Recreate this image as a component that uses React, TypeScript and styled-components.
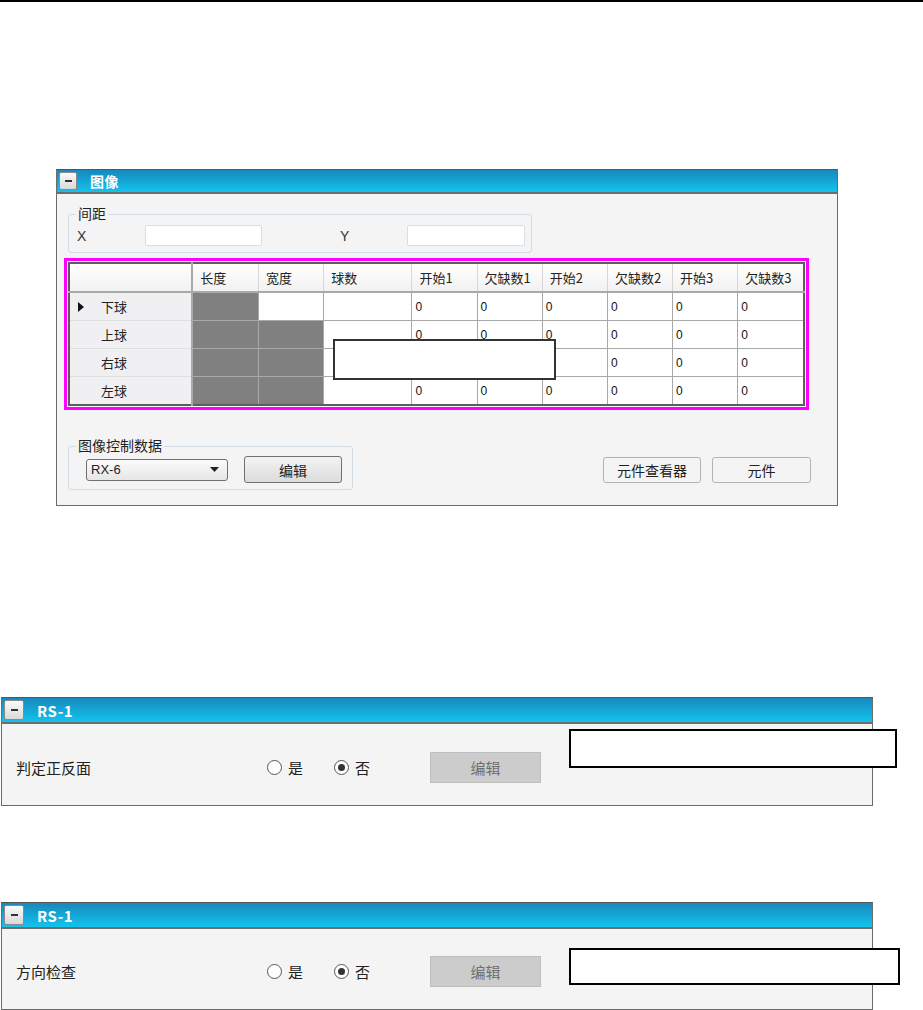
import React from "react";
import styled, { createGlobalStyle } from "styled-components";

const GlobalStyle = createGlobalStyle`
    html, body {
        margin: 0;
        padding: 0;
        background: #ffffff;
    }
    body {
        font-family: "Noto Sans CJK SC", "Liberation Sans", sans-serif;
        color: #222;
    }
`;

const columns = [
    { label: "长度", width: 66 },
    { label: "宽度", width: 65 },
    { label: "球数", width: 88 },
    { label: "开始1", width: 65 },
    { label: "欠缺数1", width: 65 },
    { label: "开始2", width: 65 },
    { label: "欠缺数2", width: 65 },
    { label: "开始3", width: 65 },
    { label: "欠缺数3", width: 66 },
];

const rows = [
    { name: "下球", dark: [true, false, false], current: true },
    { name: "上球", dark: [true, true, false], current: false },
    { name: "右球", dark: [true, true, false], current: false },
    { name: "左球", dark: [true, true, false], current: false },
];

const Page = styled.div`
    display: flex;
    flex-direction: column;
    width: 923px;
    min-height: 1010px;
`;

const TopRule = styled.div`
    height: 2px;
    background: #000;
`;

const Panel = styled.section<{ $left: number; $top: number; $width: number }>`
    position: relative;
    margin-left: ${p => p.$left}px;
    margin-top: ${p => p.$top}px;
    width: ${p => p.$width}px;
    box-sizing: border-box;
    border: 1px solid #6b6b6b;
    border-top-color: #555;
    background: #f4f4f4;
`;

const TitleBar = styled.div<{ $height: number }>`
    display: flex;
    align-items: center;
    height: ${p => p.$height}px;
    box-sizing: border-box;
    padding-left: 2px;
    background: linear-gradient(to bottom, #1888bb 0%, #14a9d8 55%, #12c3ed 100%);
    border-bottom: 2px solid #6d6d6d;
`;

const Collapse = styled.span<{ $size: number }>`
    display: flex;
    align-items: center;
    justify-content: center;
    width: ${p => p.$size}px;
    height: ${p => p.$size}px;
    box-sizing: border-box;
    border: 1px solid #8a8a8a;
    border-radius: 2px;
    background: linear-gradient(to bottom, #fafafa, #d9d9d9);

    &::before {
        content: "";
        width: 7px;
        height: 2px;
        background: #333;
    }
`;

const Title = styled.span<{ $size: number }>`
    margin-left: 13px;
    color: #fff;
    font-size: ${p => p.$size}px;
    font-weight: 700;
    letter-spacing: 0.5px;
`;

const Body = styled.div`
    display: flex;
    flex-direction: column;
    padding: 20px 0 15px 11px;
    font-size: 14px;
`;

const GroupBox = styled.div<{ $width: number; $height: number }>`
    position: relative;
    width: ${p => p.$width}px;
    height: ${p => p.$height}px;
    box-sizing: border-box;
    border: 1px solid #d3dde5;
    border-radius: 3px;
`;

const Caption = styled.span`
    position: absolute;
    left: 7px;
    top: -12px;
    padding: 0 2px;
    background: #f4f4f4;
    font-size: 14px;
    line-height: 20px;
    color: #222;
`;

const SpacingRow = styled.div`
    display: flex;
    align-items: center;
    padding: 10px 0 0 8px;
`;

const AxisLabel = styled.span<{ $width: number }>`
    width: ${p => p.$width}px;
    font-family: "Liberation Sans", sans-serif;
    font-size: 14px;
    color: #333;
`;

const TextInput = styled.div<{ $width: number; $gap?: number }>`
    width: ${p => p.$width}px;
    height: 21px;
    margin-right: ${p => p.$gap ?? 0}px;
    box-sizing: border-box;
    border: 1px solid #d6dee6;
    border-radius: 2px;
    background: #fff;
`;

const HighlightFrame = styled.div`
    position: relative;
    width: 745px;
    margin: 5px 0 0 -4px;
    box-sizing: border-box;
    border: 3px solid #ff00ff;
    padding: 1px;
`;

const Grid = styled.table`
    border-collapse: collapse;
    table-layout: fixed;
    width: 737px;
    border: 2px solid #5e5e5e;
    background: #fff;
    font-size: 13px;
`;

const Col = styled.col<{ $width: number }>`
    width: ${p => p.$width}px;
`;

const HeadCell = styled.th`
    height: 27px;
    padding: 0 0 0 7px;
    overflow: hidden;
    text-align: left;
    font-weight: 400;
    white-space: nowrap;
    color: #222;
    background: linear-gradient(to bottom, #ffffff, #f1f1f1);
    border-right: 1px solid #d7d7d7;
    border-bottom: 2px solid #a9a9a9;
`;

const RowHead = styled.th`
    height: 27px;
    padding: 0;
    font-weight: 400;
    text-align: left;
    background: #f0f0f2;
    border-right: 2px solid #a9a9a9;
    border-bottom: 1px solid #dedede;
`;

const CornerCell = styled(RowHead)`
    background: linear-gradient(to bottom, #ffffff, #f1f1f1);
    border-bottom: 2px solid #a9a9a9;
`;

const RowHeadInner = styled.div`
    display: flex;
    align-items: center;
    padding-left: 8px;
`;

const Marker = styled.span`
    width: 23px;
    display: flex;
    align-items: center;
`;

const Cell = styled.td<{ $dark?: boolean }>`
    height: 27px;
    padding: 0 0 0 3px;
    overflow: hidden;
    font-family: "Liberation Sans Narrow", "Liberation Sans", sans-serif;
    font-size: 12px;
    background: ${p => (p.$dark ? "#808080" : "#fff")};
    border: 1px solid #a8a8a8;
    color: #111;
`;

const GridCover = styled.div<{ $left: number; $top: number; $width: number; $height: number }>`
    position: absolute;
    left: ${p => p.$left}px;
    top: ${p => p.$top}px;
    width: ${p => p.$width}px;
    height: ${p => p.$height}px;
    box-sizing: border-box;
    border: 2px solid #333;
    background: #fff;
`;

const ControlRow = styled.div`
    display: flex;
    align-items: flex-end;
    justify-content: space-between;
    margin-top: 36px;
    padding-right: 26px;
`;

const ControlInner = styled.div`
    display: flex;
    align-items: center;
    padding: 9px 0 0 17px;
`;

const Select = styled.div`
    display: flex;
    align-items: center;
    justify-content: space-between;
    width: 142px;
    height: 22px;
    box-sizing: border-box;
    padding: 0 8px 0 4px;
    margin-right: 16px;
    border: 1px solid #707070;
    border-radius: 3px;
    background: linear-gradient(to bottom, #fbfbfb, #e6e6e6);
    font-family: "Liberation Sans", sans-serif;
    font-size: 13px;
    color: #222;
`;

const Button = styled.button<{ $width: number; $variant?: "raised" | "flat" }>`
    width: ${p => p.$width}px;
    height: ${p => (p.$variant === "flat" ? 26 : 27)}px;
    box-sizing: border-box;
    border: 1px solid ${p => (p.$variant === "flat" ? "#b3b3b3" : "#707070")};
    border-radius: 3px;
    background: ${p =>
        p.$variant === "flat"
            ? "#f4f4f4"
            : "linear-gradient(to bottom, #f3f3f3, #dcdcdc)"};
    font-family: "Noto Sans CJK SC", sans-serif;
    font-size: 14px;
    color: #222;
    padding: 0;
`;

const ButtonPair = styled.div`
    display: flex;
    gap: 11px;
    margin-bottom: 7px;
`;

const OptionBody = styled.div<{ $height: number; $pad: number }>`
    display: flex;
    align-items: flex-start;
    height: ${p => p.$height}px;
    box-sizing: border-box;
    padding: ${p => p.$pad}px 0 0 14px;
    font-size: 15px;
`;

const OptionInner = styled.div`
    display: flex;
    align-items: center;
    height: 31px;
`;

const OptionLabel = styled.span`
    width: 251px;
`;

const Radio = styled.span<{ $checked?: boolean }>`
    display: inline-flex;
    align-items: center;
    justify-content: center;
    width: 15px;
    height: 15px;
    box-sizing: border-box;
    border: 1px solid #555;
    border-radius: 50%;
    background: #fff;
    margin-right: 6px;

    &::after {
        content: "";
        display: ${p => (p.$checked ? "block" : "none")};
        width: 7px;
        height: 7px;
        border-radius: 50%;
        background: #333;
    }
`;

const RadioItem = styled.label<{ $gap: number }>`
    display: flex;
    align-items: center;
    margin-right: ${p => p.$gap}px;
    color: #222;
`;

const DisabledButton = styled.button`
    width: 111px;
    height: 31px;
    box-sizing: border-box;
    border: 1px solid #bebebe;
    background: #cccccc;
    font-family: "Noto Sans CJK SC", sans-serif;
    font-size: 15px;
    color: #6e6e6e;
    padding: 0;
`;

const Note = styled.div<{ $top: number; $width: number; $height: number }>`
    position: absolute;
    left: 567px;
    top: ${p => p.$top}px;
    width: ${p => p.$width}px;
    height: ${p => p.$height}px;
    box-sizing: border-box;
    border: 2px solid #000;
    background: #fff;
`;

function Arrow() {
    return (
        <svg width="6" height="10" viewBox="0 0 6 10">
            <path d="M0 0 L6 5 L0 10 Z" fill="#111" />
        </svg>
    );
}

function Caret() {
    return (
        <svg width="9" height="5" viewBox="0 0 9 5">
            <path d="M0 0 H9 L4.5 5 Z" fill="#222" />
        </svg>
    );
}

type OptionPanelProps = {
    top: number;
    label: string;
    pad: number;
    bodyHeight: number;
    noteTop: number;
    noteWidth: number;
    noteHeight: number;
};

function OptionPanel(props: OptionPanelProps) {
    return (
        <Panel $left={1} $top={props.top} $width={872}>
            <TitleBar $height={26}>
                <Collapse $size={20} />
                <Title $size={15}>RS-1</Title>
            </TitleBar>
            <OptionBody $height={props.bodyHeight} $pad={props.pad}>
                <OptionInner>
                    <OptionLabel>{props.label}</OptionLabel>
                    <RadioItem $gap={31}>
                        <Radio />是
                    </RadioItem>
                    <RadioItem $gap={60}>
                        <Radio $checked />否
                    </RadioItem>
                    <DisabledButton disabled>编辑</DisabledButton>
                </OptionInner>
            </OptionBody>
            <Note $top={props.noteTop} $width={props.noteWidth} $height={props.noteHeight} />
        </Panel>
    );
}

export default function App() {
    return (
        <Page>
            <GlobalStyle />
            <TopRule />

            <Panel $left={56} $top={167} $width={782}>
                <TitleBar $height={24}>
                    <Collapse $size={18} />
                    <Title $size={14}>图像</Title>
                </TitleBar>
                <Body>
                    <GroupBox $width={464} $height={39}>
                        <Caption>间距</Caption>
                        <SpacingRow>
                            <AxisLabel $width={68}>X</AxisLabel>
                            <TextInput $width={117} $gap={78} />
                            <AxisLabel $width={67}>Y</AxisLabel>
                            <TextInput $width={118} />
                        </SpacingRow>
                    </GroupBox>

                    <HighlightFrame>
                        <Grid>
                            <colgroup>
                                <Col $width={123} />
                                {columns.map(c => (
                                    <Col key={c.label} $width={c.width} />
                                ))}
                            </colgroup>
                            <thead>
                                <tr>
                                    <CornerCell />
                                    {columns.map(c => (
                                        <HeadCell key={c.label}>{c.label}</HeadCell>
                                    ))}
                                </tr>
                            </thead>
                            <tbody>
                                {rows.map(r => (
                                    <tr key={r.name}>
                                        <RowHead>
                                            <RowHeadInner>
                                                <Marker>{r.current && <Arrow />}</Marker>
                                                {r.name}
                                            </RowHeadInner>
                                        </RowHead>
                                        {r.dark.map((d, i) => (
                                            <Cell key={i} $dark={d} />
                                        ))}
                                        {columns.slice(3).map(c => (
                                            <Cell key={c.label}>0</Cell>
                                        ))}
                                    </tr>
                                ))}
                            </tbody>
                        </Grid>
                        <GridCover $left={266} $top={78} $width={223} $height={41} />
                    </HighlightFrame>

                    <ControlRow>
                        <GroupBox $width={285} $height={44}>
                            <Caption>图像控制数据</Caption>
                            <ControlInner>
                                <Select>
                                    RX-6
                                    <Caret />
                                </Select>
                                <Button $width={98}>编辑</Button>
                            </ControlInner>
                        </GroupBox>
                        <ButtonPair>
                            <Button $width={98} $variant="flat">元件查看器</Button>
                            <Button $width={99} $variant="flat">元件</Button>
                        </ButtonPair>
                    </ControlRow>
                </Body>
            </Panel>

            <OptionPanel
                top={191}
                label="判定正反面"
                pad={28}
                bodyHeight={81}
                noteTop={31}
                noteWidth={328}
                noteHeight={39}
            />

            <OptionPanel
                top={96}
                label="方向检查"
                pad={27}
                bodyHeight={80}
                noteTop={45}
                noteWidth={331}
                noteHeight={37}
            />
        </Page>
    );
}
